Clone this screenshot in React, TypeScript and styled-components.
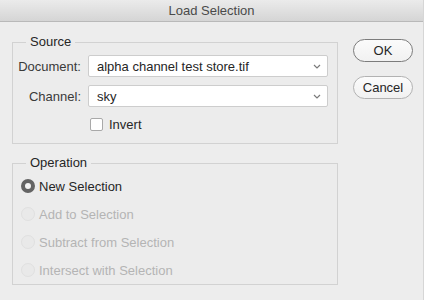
import React from 'react'
import styled, { createGlobalStyle } from 'styled-components'

const GlobalStyle = createGlobalStyle`
  html, body {
    margin: 0;
    padding: 0;
    background: #ededed;
    font-family: 'Liberation Sans', Arial, sans-serif;
  }
`

const Chevron = () => (
  <svg width='8' height='5' viewBox='0 0 8 5'>
    <path d='M1 1 L4 4 L7 1' fill='none' stroke='#7a7a7a' strokeWidth='1.2' />
  </svg>
)

const App = () => {
  return (
    <Window>
      <GlobalStyle />
      <TitleBar>Load Selection</TitleBar>
      <Body>
        <Left>
          <Group>
            <Legend>Source</Legend>
            <FormGrid>
              <Label>Document:</Label>
              <Select>
                <span>alpha channel test store.tif</span>
                <Chevron />
              </Select>
              <Label>Channel:</Label>
              <Select>
                <span>sky</span>
                <Chevron />
              </Select>
              <span />
              <CheckRow>
                <Checkbox />
                Invert
              </CheckRow>
            </FormGrid>
          </Group>
          <Group>
            <Legend>Operation</Legend>
            <RadioList>
              <RadioRow>
                <Radio checked />
                New Selection
              </RadioRow>
              <RadioRow disabled>
                <Radio disabled />
                Add to Selection
              </RadioRow>
              <RadioRow disabled>
                <Radio disabled />
                Subtract from Selection
              </RadioRow>
              <RadioRow disabled>
                <Radio disabled />
                Intersect with Selection
              </RadioRow>
            </RadioList>
          </Group>
        </Left>
        <Right>
          <Button primary>OK</Button>
          <Button>Cancel</Button>
        </Right>
      </Body>
    </Window>
  )
}

export default App

const Window = styled.div`
  width: 424px;
  height: 300px;
  box-sizing: border-box;
  border-right: 1px solid #d6d6d6;
  background: #ededed;
  overflow: hidden;
`
const TitleBar = styled.div`
  height: 21px;
  border-bottom: 1px solid #b9b9b9;
  background: linear-gradient(#ebebeb, #d5d5d5);
  color: #4a4a4a;
  font-size: 13px;
  line-height: 22px;
  text-align: center;
`
const Body = styled.div`
  display: flex;
  padding: 12px 0 0 12px;
`
const Left = styled.div`
  width: 326px;
  display: flex;
  flex-direction: column;
  gap: 11px;
`
const Group = styled.fieldset`
  margin: 0;
  padding: 0;
  border: 1px solid #d2d2d2;
  background: #ececec;
`
const Legend = styled.legend`
  margin-left: 13px;
  padding: 0 4px;
  font-size: 13px;
  line-height: 16px;
  color: #262626;
`
const FormGrid = styled.div`
  display: grid;
  grid-template-columns: 68px 240px;
  column-gap: 7px;
  row-gap: 8px;
  align-items: center;
  padding: 5px 0 11px;
`
const Label = styled.div`
  text-align: right;
  font-size: 13px;
  color: #3a3a3a;
`
const Select = styled.div`
  height: 22px;
  box-sizing: border-box;
  border: 1px solid #cdcdcd;
  border-radius: 2px;
  background: #fff;
  display: flex;
  align-items: center;
  justify-content: space-between;
  padding: 0 6px 0 8px;
  font-size: 13px;
  color: #262626;
`
const CheckRow = styled.div`
  display: flex;
  align-items: center;
  gap: 6px;
  margin-top: 2px;
  padding-left: 2px;
  font-size: 13px;
  color: #262626;
`
const Checkbox = styled.span`
  width: 11px;
  height: 11px;
  border: 1px solid #a9a9a9;
  border-radius: 2px;
  background: #fff;
`
const RadioList = styled.div`
  display: flex;
  flex-direction: column;
  padding: 1px 0 0 8px;
`
const RadioRow = styled.div<{ disabled?: boolean }>`
  height: 28px;
  display: flex;
  align-items: center;
  gap: 4px;
  font-size: 13px;
  color: ${(p) => (p.disabled ? '#b4b4b4' : '#262626')};
`
const Radio = styled.span<{ checked?: boolean; disabled?: boolean }>`
  width: 14px;
  height: 14px;
  box-sizing: border-box;
  border-radius: 50%;
  border: ${(p) => (p.checked ? '4px solid #646464' : '1px solid #e0e0e0')};
  background: ${(p) => (p.checked ? '#f4f4f4' : '#e9e9e9')};
`
const Right = styled.div`
  margin-left: 15px;
  padding-top: 5px;
  display: flex;
  flex-direction: column;
  gap: 14px;
`
const Button = styled.div<{ primary?: boolean }>`
  width: 60px;
  height: 23px;
  box-sizing: border-box;
  border: 1px solid ${(p) => (p.primary ? '#7c7c7c' : '#b2b2b2')};
  border-radius: 12px;
  background: linear-gradient(#fbfbfb, #f1f1f1);
  display: flex;
  align-items: center;
  justify-content: center;
  font-size: 13px;
  color: #262626;
`
